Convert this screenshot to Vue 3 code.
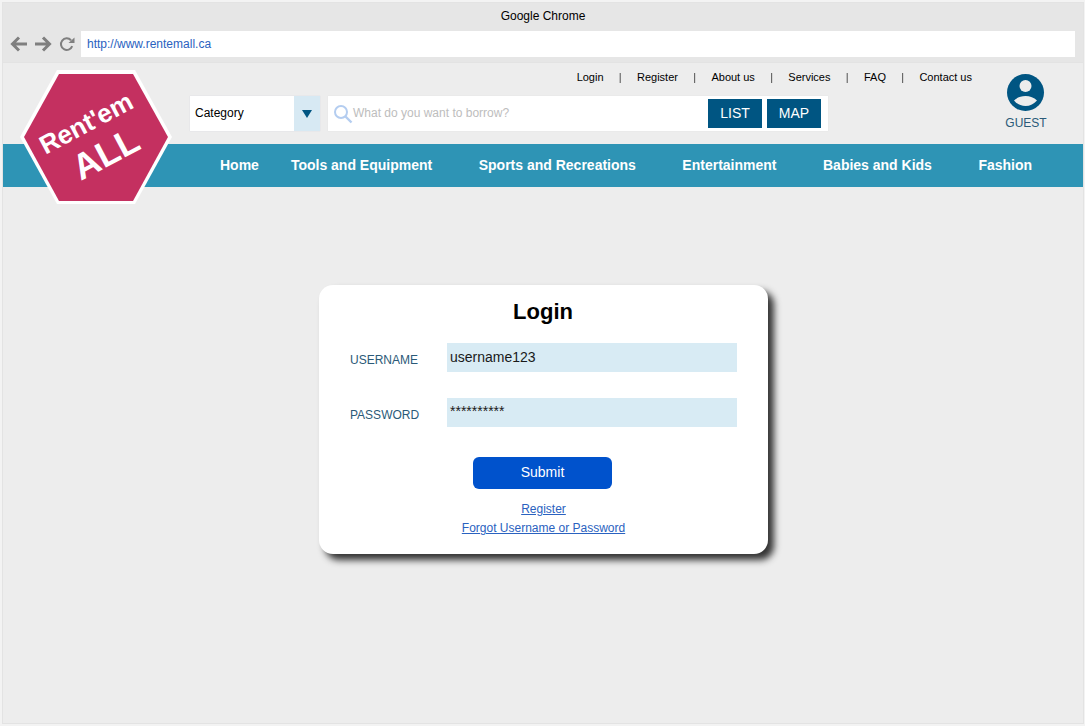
<script setup>
const links = ['Login', 'Register', 'About us', 'Services', 'FAQ', 'Contact us']
const nav = ['Tools and Equipment', 'Sports and Recreations', 'Entertainment', 'Babies and Kids', 'Fashion']
</script>

<template>
  <div class="frame">
    <div class="chrome">
      <div class="chrome-title">Google Chrome</div>
      <div class="chrome-bar">
        <svg class="ico" width="18" height="16" viewBox="0 0 18 16"><path d="M17 8H3M9 1.500L2.500 8l6.500 6.500" fill="none" stroke="#7f7f7f" stroke-width="3"/></svg>
        <svg class="ico fwd" width="18" height="16" viewBox="0 0 18 16"><path d="M1 8H15M9 1.500L15.500 8 9 14.500" fill="none" stroke="#7f7f7f" stroke-width="3"/></svg>
        <svg class="ico rel" width="16" height="16" viewBox="0 0 16 16"><path d="M13.200 10.200A5.800 5.800 0 1 1 12 4.200" fill="none" stroke="#7f7f7f" stroke-width="2"/><path d="M9.500 7h6V1.500z" fill="#7f7f7f"/></svg>
        <div class="url">http://www.rentemall.ca</div>
      </div>
    </div>

    <div class="content">
      <header class="header">
        <div class="header-main">
          <div class="top-links">
            <template v-for="(l, i) in links" :key="l">
              <span v-if="i" class="sep">|</span>
              <span>{{ l }}</span>
            </template>
          </div>
          <div class="search-row">
            <div class="category">
              <span class="cat-label">Category</span>
              <span class="cat-arrow"><i></i></span>
            </div>
            <div class="search">
              <svg width="20" height="20" viewBox="0 0 20 20"><circle cx="8" cy="8" r="6" fill="none" stroke="#b4cdf0" stroke-width="2"/><path d="M12.500 12.500L18.500 18.500" stroke="#b4cdf0" stroke-width="2.400"/></svg>
              <span class="placeholder">What do you want to borrow?</span>
              <span class="sbtn">LIST</span>
              <span class="sbtn">MAP</span>
            </div>
          </div>
        </div>
        <div class="guest">
          <svg width="38" height="38" viewBox="0 0 38 38">
            <circle cx="18.500" cy="18.500" r="18.500" fill="#005582"/>
            <circle cx="18.500" cy="12" r="6" fill="#ececec"/>
            <path d="M7 26.500C10 23.500 14 22 18.500 22s8.500 1.500 11.500 4.500C27 30 23 32 18.500 32S10 30 7 26.500z" fill="#ececec"/>
          </svg>
          <span>GUEST</span>
        </div>
      </header>

      <nav class="nav">
        <span class="home">Home</span>
        <span v-for="n in nav" :key="n">{{ n }}</span>
      </nav>

      <div class="logo">
        <svg width="156" height="140" viewBox="0 0 156 140">
          <polygon points="39,2 117,2 154,69 117,136 39,136 2,69" fill="#fff"/>
          <polygon points="41,6 115,6 150,69 115,133 41,133 6,69" fill="#c43060"/>
        </svg>
        <span class="logo-a">Rent'em</span>
        <span class="logo-b">ALL</span>
      </div>

      <main class="stage">
        <section class="card">
          <h1>Login</h1>
          <div class="field">
            <label>USERNAME</label>
            <div class="input">username123</div>
          </div>
          <div class="field second">
            <label>PASSWORD</label>
            <div class="input pass">**********</div>
          </div>
          <button class="submit">Submit</button>
          <a class="link first">Register</a>
          <a class="link">Forgot Username or Password</a>
        </section>
      </main>
    </div>
  </div>
</template>

<style>
html, body { margin: 0; background: #f3f3f3; }
</style>

<style scoped>
.frame {
  box-sizing: border-box;
  width: 1085px;
  height: 726px;
  padding: 3px 2px 3px 3px;
  display: flex;
  flex-direction: column;
  font-family: "Liberation Sans", Arial, sans-serif;
  color: #000;
}
.frame > * { box-shadow: 0 0 0 1px #e3e3e3; }
.chrome { height: 60px; background: #e6e6e6; flex: none; }
.chrome-title { height: 28px; line-height: 26px; text-align: center; font-size: 12px; }
.chrome-bar { display: flex; align-items: center; height: 26px; padding-left: 7px; }
.ico { flex: none; }
.fwd { margin-left: 6px; }
.rel { margin-left: 7px; }
.url {
  flex: none;
  box-sizing: border-box;
  width: 994px;
  height: 26px;
  margin-left: 6px;
  padding-left: 6px;
  background: #fff;
  color: #2a62c0;
  font-size: 12px;
  line-height: 26px;
}
.content { position: relative; flex: 1; display: flex; flex-direction: column; background: #ededed; }
.header { height: 81px; flex: none; display: flex; }
.header-main { width: 782px; margin-left: 187px; }
.top-links {
  display: flex;
  justify-content: flex-end;
  gap: 15.300px;
  padding-top: 8px;
  height: 14px;
  line-height: 13px;
  font-size: 11px;
}
.sep { opacity: .75; will-change: opacity; }
.search-row { display: flex; gap: 8px; margin-top: 11px; }
.category {
  box-sizing: border-box;
  width: 130px;
  height: 35px;
  display: flex;
  background: #fff;
  box-shadow: 0 0 1px #ccd;
  font-size: 12px;
}
.cat-label { flex: 1; line-height: 34px; padding-left: 5px; }
.cat-arrow {
  width: 26px;
  background: #d7e9f3;
  display: flex;
  align-items: center;
  justify-content: center;
}
.cat-arrow i {
  width: 0;
  height: 0;
  border-left: 5px solid transparent;
  border-right: 5px solid transparent;
  border-top: 8px solid #005582;
}
.search {
  box-sizing: border-box;
  width: 500px;
  height: 35px;
  display: flex;
  align-items: center;
  padding: 0 7px 0 5px;
  background: #fff;
  box-shadow: 0 0 1px #ddd;
}
.placeholder { flex: 1; padding-bottom: 2px; color: #bdbdbd; font-size: 12px; }
.sbtn {
  width: 54px;
  height: 29px;
  line-height: 29px;
  margin-left: 5px;
  background: #005582;
  color: #fff;
  text-align: center;
  font-size: 14px;
}
.guest {
  width: 42px;
  margin-left: 33px;
  padding-top: 11px;
  display: flex;
  flex-direction: column;
  align-items: center;
  color: #2b5a78;
  font-size: 12px;
  line-height: 14px;
}
.guest svg { margin-left: -1px; }
.guest span { margin-top: 4px; }
.nav {
  flex: none;
  box-sizing: border-box;
  height: 43px;
  padding-bottom: 2px;
  display: flex;
  align-items: center;
  gap: 46.500px;
  padding-left: 217px;
  background: #2e94b5;
  color: #fff;
  font-size: 14px;
  font-weight: 700;
  box-shadow: none;
}
.home { margin-right: -14.500px; }
.logo { position: absolute; left: 15px; top: 5px; width: 156px; height: 140px; }
.logo svg { display: block; }
.logo-a, .logo-b {
  position: absolute;
  color: #fff;
  font-weight: 700;
  line-height: 1;
  white-space: nowrap;
  transform: translate(-50%, -50%) rotate(-28deg);
}
.logo-a { left: 68px; top: 55px; font-size: 26px; }
.logo-b { left: 88px; top: 86px; font-size: 36px; }
.stage { flex: 1; padding-top: 98px; display: flex; justify-content: center; align-items: flex-start; }
.card {
  box-sizing: border-box;
  width: 449px;
  height: 269px;
  padding-top: 14px;
  background: #fff;
  border-radius: 14px;
  box-shadow: 6px 6px 7px #333;
  display: flex;
  flex-direction: column;
  align-items: center;
}
h1 { margin: 0; height: 25px; line-height: 25px; font-size: 22px; font-weight: 700; }
.field { align-self: stretch; display: flex; padding: 0 31px; margin-top: 19px; }
.field.second { margin-top: 26px; }
.field label { width: 97px; padding-top: 10px; padding-left: 0.500px; margin-right: -0.500px; font-size: 12px; line-height: 14px; color: #2b5a78; }
.input {
  flex: 1;
  height: 29px;
  line-height: 28px;
  padding-left: 3.500px;
  background: #d8ebf4;
  font-size: 14px;
  color: #1a1a1a;
}
.pass { line-height: 26px; }
.submit {
  width: 139px;
  height: 32px;
  margin-top: 30px;
  margin-left: -1px;
  padding: 0 0 2px;
  border: 0;
  border-radius: 6px;
  background: #0052cc;
  color: #fff;
  font: 14px "Liberation Sans", Arial, sans-serif;
}
.link { position: relative; left: 0.500px; font-size: 12px; line-height: 19px; color: #2a62c0; text-decoration: underline; }
.link.first { margin-top: 11px; }
</style>
